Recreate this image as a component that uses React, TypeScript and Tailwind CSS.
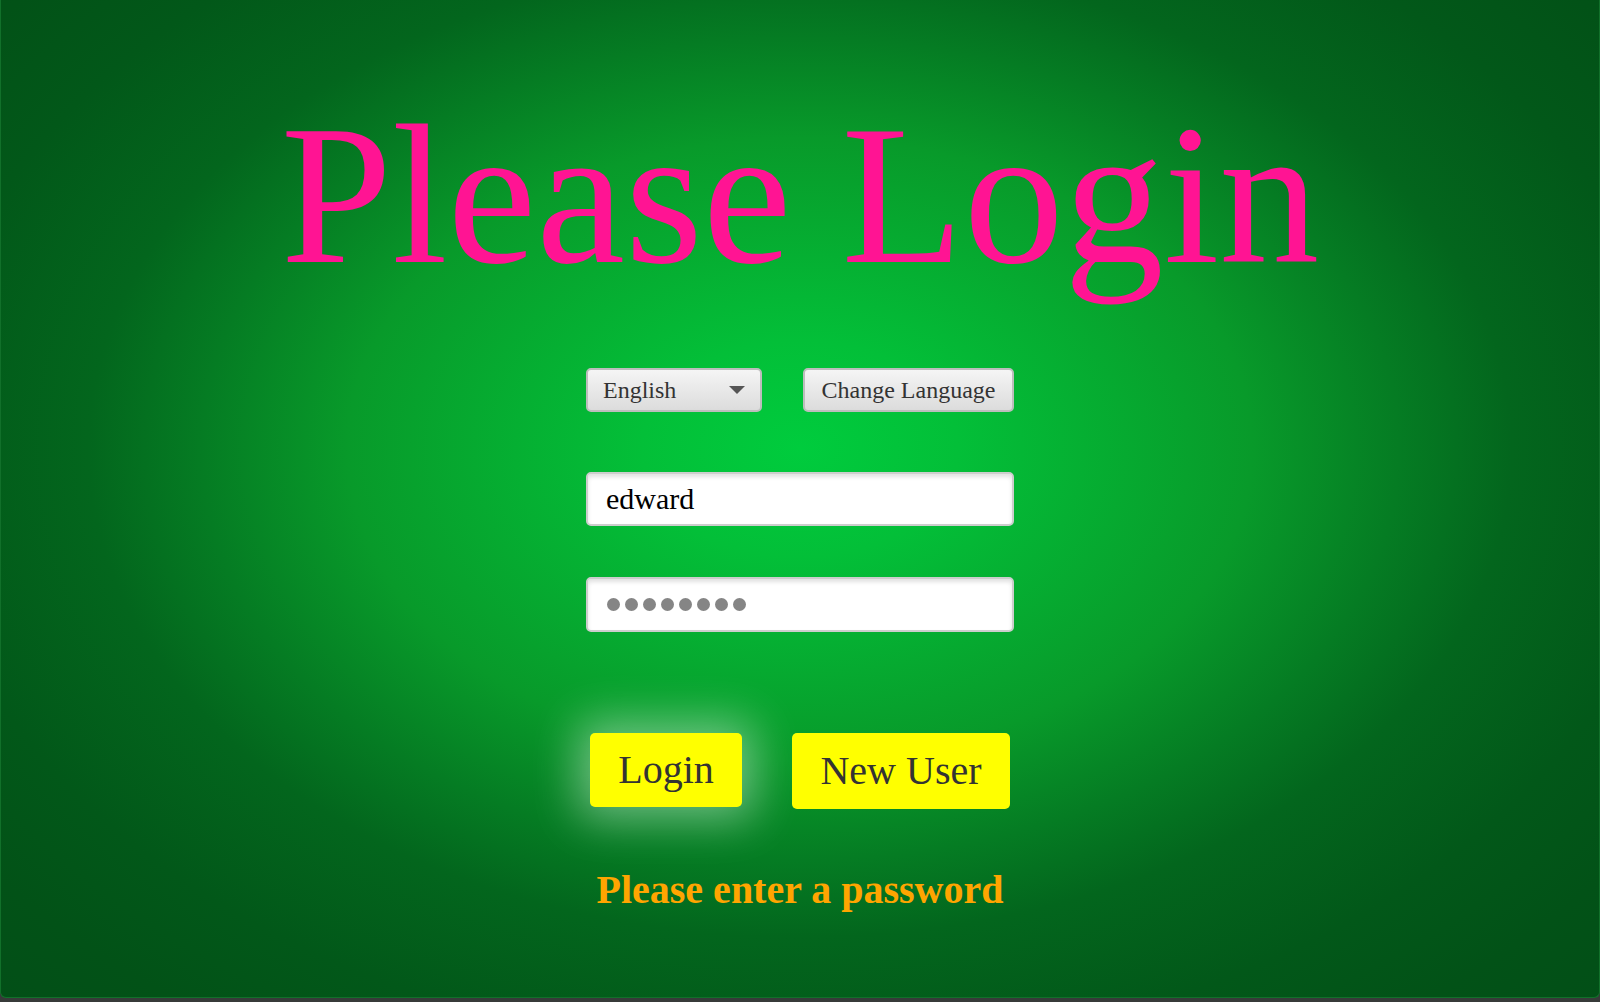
import React from "react";

const serif = "font-['Liberation_Serif','Times_New_Roman',serif]";

function PasswordDots({ count }: { count: number }) {
  return (
    <div className="flex items-center gap-[5px]">
      {Array.from({ length: count }).map((_, i) => (
        <span key={i} className="block w-[13px] h-[13px] rounded-full bg-[#858585]" />
      ))}
    </div>
  );
}

export default function App() {
  return (
    <div className="w-[1600px] h-[1002px] overflow-hidden bg-[#373a39] flex flex-col">
      <div
        className={`h-[998px] shrink-0 flex flex-col items-center rounded-b-[6px] border-x border-b border-[#11702a] bg-[radial-gradient(ellipse_at_50%_45%,#00cc3d_0%,#03bf38_14%,#089a2a_40%,#057c23_53%,#03661d_63%,#025819_78%,#025217_90%,#024f17_100%)] ${serif}`}
      >
        {/* Title */}
        <h1 className="mt-[95px] text-[200px] leading-[200px] text-[#ff1493] whitespace-nowrap">
          Please Login
        </h1>

        {/* Language row */}
        <div className="mt-[73px] w-[428px] flex justify-between">
          <div className="w-[176px] h-[44px] flex items-center justify-between pl-[15px] pr-[15px] rounded-[5px] border-2 border-[#bdbdbd] bg-gradient-to-b from-[#f5f5f5] to-[#dcdcdc] text-[24px] leading-none text-[#333]">
            <span>English</span>
            <svg width="16" height="8" viewBox="0 0 16 8">
              <path d="M0 0 H16 L8 8 Z" fill="#555" />
            </svg>
          </div>
          <button className="w-[211px] h-[44px] flex items-center justify-center rounded-[5px] border-2 border-[#bdbdbd] bg-gradient-to-b from-[#f5f5f5] to-[#dcdcdc] text-[24px] leading-none text-[#333]">
            Change Language
          </button>
        </div>

        {/* Username */}
        <div className="mt-[60px] w-[428px] h-[54px] flex items-center pl-[18px] rounded-[5px] border-2 border-[#cdcdcd] bg-white shadow-[inset_0_3px_4px_rgba(0,0,0,0.12)] text-[30px] leading-none text-black">
          edward
        </div>

        {/* Password */}
        <div className="mt-[51px] w-[428px] h-[55px] flex items-center pl-[19px] rounded-[5px] border-2 border-[#cdcdcd] bg-white shadow-[inset_0_3px_4px_rgba(0,0,0,0.12)]">
          <PasswordDots count={8} />
        </div>

        {/* Actions */}
        <div className="mt-[101px] flex items-start gap-[50px]">
          <button className="w-[152px] h-[74px] flex items-center justify-center rounded-[5px] bg-[#ffff00] text-[40px] leading-none text-[#333] shadow-[0_0_45px_12px_rgba(255,255,255,0.42)]">
            Login
          </button>
          <button className="w-[218px] h-[76px] flex items-center justify-center rounded-[5px] bg-[#ffff00] text-[40px] leading-none text-[#333]">
            New User
          </button>
        </div>

        <p className="mt-[61px] text-[40px] leading-[40px] font-bold text-[#ffa500]">
          Please enter a password
        </p>
      </div>
    </div>
  );
}
